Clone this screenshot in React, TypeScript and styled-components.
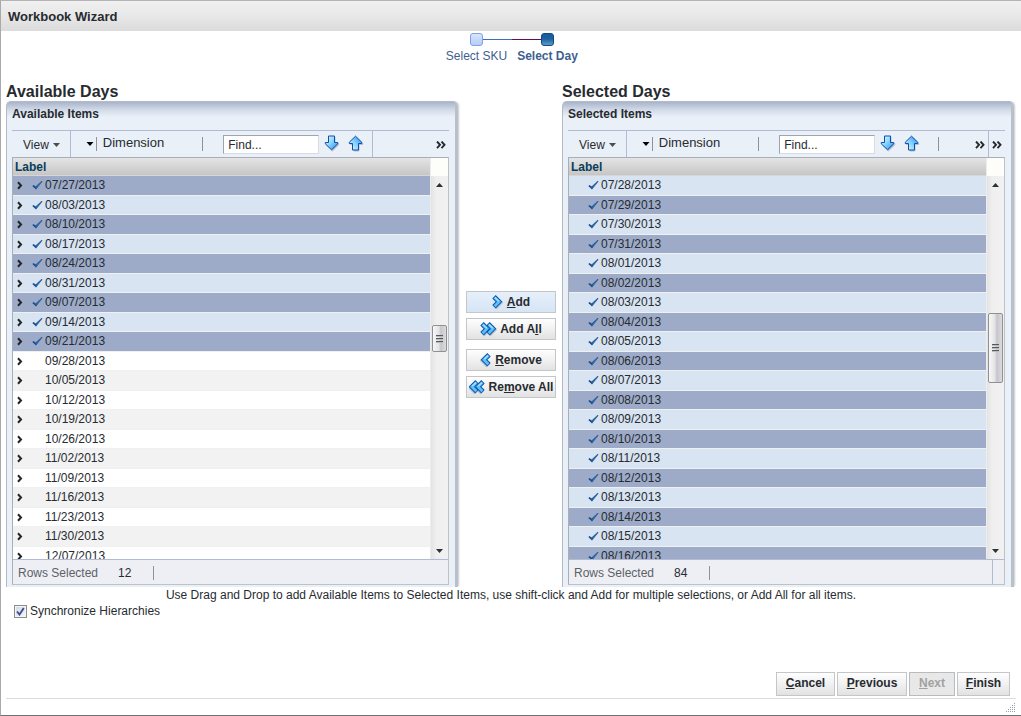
import React, { useId } from "react";
import styled, { createGlobalStyle, css } from "styled-components";

const colors = {
  text: "#272b30",
  link: "#3e5f8f",
  rule: "#b2bad4",
  frame: "#a9afb8",
  panel: "#e9f0f8",
  rowDark: "#9dabc9",
  rowLight: "#d8e4f2",
};

const GlobalStyle = createGlobalStyle`
  *, *::before, *::after { box-sizing: border-box; }
  body {
    margin: 0;
    background: #fff;
    color: ${colors.text};
    font: 12px/16px "Liberation Sans", Arial, sans-serif;
  }
  button, input { font: inherit; color: inherit; }
  svg { display: block; flex: none; }
`;

const Dialog = styled.div`
  display: flex;
  flex-direction: column;
  min-height: 100vh;
  border-top: 1px solid #b4b4b6;
  border-left: 1px solid #a9a9ab;
  border-bottom: 1px solid #6f7073;
`;

const TitleBar = styled.header`
  height: 30px;
  padding: 0 7px;
  background: linear-gradient(#f1f0f1, #e8e8e8 50%, #dbdbdb);
`;

const Title = styled.h1`
  margin: 0;
  font-size: 13px;
  line-height: 32px;
`;

const Train = styled.ol`
  display: flex;
  justify-content: center;
  margin: 0;
  padding: 2px 0 0 2px;
  list-style: none;
`;

const Stop = styled.li`
  width: 71px;
`;

const StopTrack = styled.div`
  display: flex;
  align-items: center;
  height: 13px;
`;

const Rail = styled.span<{ $color: string }>`
  flex: 1;
  height: 1px;
  background: ${(p) => p.$color};
`;

const StopBox = styled.span<{ $current?: boolean }>`
  width: 13px;
  height: 13px;
  border: 1px solid ${(p) => (p.$current ? "#0f4a86" : "#7f9fe8")};
  border-radius: 3px;
  background: ${(p) =>
    p.$current
      ? "linear-gradient(#1a5b9b, #1f629f 45%, #5a9acb)"
      : "linear-gradient(#dbe6fd, #c6d8fb 50%, #b9cefa)"};
`;

const StopLink = styled.a<{ $current?: boolean }>`
  display: flex;
  justify-content: center;
  padding-top: 2px;
  color: ${colors.link};
  font-weight: ${(p) => (p.$current ? "bold" : "normal")};
  text-decoration: none;
  white-space: nowrap;
`;

const Shuttle = styled.main`
  display: grid;
  grid-template-columns: 1fr 104px 1fr;
  padding: 17px 7px 0 5px;
`;

const Column = styled.section`
  min-width: 0;
`;

const ColumnTitle = styled.h2`
  margin: 0;
  height: 20px;
  font-size: 16px;
  line-height: 22px;
`;

const Panel = styled.div`
  padding: 0 6px 2px 5px;
  border: solid #b3bac9;
  border-width: 1px 3px 0 1px;
  border-right-color: #b9c0ca;
  border-radius: 5px 5px 0 0;
  background: linear-gradient(#a9b4cb, #d3dbe8 8px, ${colors.panel} 15px);
  box-shadow: 2px 0 2px -1px #c9cbce;
`;

const PanelTitle = styled.h3`
  margin: 0;
  height: 28px;
  font-size: 12px;
  line-height: 24px;
`;

const Toolbar = styled.div`
  display: flex;
  align-items: center;
  height: 27px;
  border-top: 1px solid ${colors.rule};
`;

const FlatButton = styled.button`
  display: flex;
  align-items: center;
  padding: 0;
  border: 0;
  background: none;
`;

const ViewButton = styled(FlatButton)`
  gap: 4px;
  height: 26px;
  padding: 2px 10px 0 11px;
  border-right: 1px solid ${colors.rule};
`;

const DimensionButton = styled(FlatButton)`
  gap: 2px;
  margin-left: 15px;
  font-size: 13px;
`;

const DimensionText = styled.span`
  padding: 0 0 3px 4px;
`;

const Tick = styled.span`
  width: 1px;
  height: 14px;
  background: #8f9399;
`;

const AfterDimension = styled.div`
  display: flex;
  flex: none;
  padding: 0 20px 0 38px;
`;

const FindField = styled.input`
  width: 96px;
  height: 19px;
  padding: 1px 4px 0;
  border: 1px solid #d8dce2;
  border-top-color: #9fa5ab;
  border-left-color: #9fa5ab;
  border-radius: 0;
  background: #fff;
  &::placeholder { color: ${colors.text}; opacity: 1; }
`;

const FindSteps = styled.div`
  display: flex;
  gap: 8px;
  padding: 0 0 2px 5px;
`;

const Divider = styled.span`
  width: 1px;
  height: 26px;
  margin-left: 8px;
  background: ${colors.rule};
`;

const ShortDivider = styled(Tick)`
  margin-left: 18px;
`;

const Overflow = styled.div`
  display: flex;
  align-items: center;
  height: 26px;
  margin-left: auto;
  padding-right: 3px;
`;

const OverflowButton = styled(FlatButton)<{ $ruled?: boolean }>`
  height: 26px;
  padding-top: 1px;
  ${(p) =>
    p.$ruled &&
    css`
      padding-right: 3px;
      margin-right: 3px;
      border-right: 1px solid ${colors.rule};
    `}
`;

const Frame = styled.div`
  border: 1px solid ${colors.frame};
  border-right-color: #bfc2c4;
  border-bottom-color: #bfc2c4;
`;

const GridArea = styled.div`
  display: grid;
  grid-template-columns: minmax(0, 1fr) 17px;
  height: 401px;
`;

const TableClip = styled.div`
  overflow: hidden;
  border-right: 1px solid #eceded;
`;

const Table = styled.table`
  width: 100%;
  border-spacing: 0;
`;

const HeadCell = styled.th`
  height: 18px;
  padding: 1px 2px 0;
  border-bottom: 1px solid #d6d6d6;
  background: linear-gradient(#e4e4e4, #c6c6c6);
  color: #073e5c;
  line-height: 16px;
  text-align: left;
`;

type Tone = "dark" | "light" | "white" | "gray";

const toneFill: Record<Tone, string> = {
  dark: colors.rowDark,
  light: colors.rowLight,
  white: "#ffffff",
  gray: "#f2f2f2",
};

const Row = styled.tr<{ $tone: Tone }>`
  background: ${(p) => toneFill[p.$tone]};
  > td { height: 20px; }
  &:nth-child(even) > td { height: 19px; }
`;

const Cell = styled.td`
  padding: 0;
  border-bottom: 1px solid #eff0f1;
  vertical-align: top;
`;

const CellContent = styled.div`
  display: grid;
  grid-template-columns: 19px 13px 1fr;
  align-items: center;
  height: 18px;
`;

const Expander = styled(FlatButton)`
  padding-left: 4px;
`;

const DateText = styled.span`
  grid-column: 3;
  line-height: 18px;
`;

const Scroller = styled.div`
  display: flex;
  flex-direction: column;
  background: #fdfefa;
`;

const Corner = styled.div`
  height: 18px;
`;

const ScrollTrack = styled.div`
  display: flex;
  flex: 1;
  flex-direction: column;
  align-items: center;
  padding: 0 1px;
  background: linear-gradient(90deg, #e3e3e3, #efefef 30%, #f1f1f1);
`;

const ScrollButton = styled(FlatButton)`
  justify-content: center;
  width: 15px;
  height: 17px;
`;

const ScrollSpace = styled.div<{ $share: number }>`
  flex: ${(p) => p.$share} 0 0;
`;

const Thumb = styled.div<{ $length: number }>`
  display: flex;
  align-items: center;
  justify-content: center;
  width: 15px;
  height: ${(p) => p.$length}px;
  border: 1px solid #8f9093;
  border-radius: 2px;
  background: linear-gradient(90deg, #f7f7f7, #e4e4e6 45%, #c5c5cb 60%, #dcdcdf);
`;

const Status = styled.div`
  display: flex;
  align-items: center;
  height: 25px;
  padding: 1px 0 0 5px;
  border-top: 1px solid ${colors.rule};
  background: #edeff5;
`;

const StatusLabel = styled.span`
  width: 100px;
  color: #5d6166;
`;

const StatusCount = styled.span`
  width: 35px;
`;

const StatusEnd = styled.span`
  align-self: stretch;
  width: 12px;
  margin: -1px 0 0 auto;
  border-left: 1px solid ${colors.rule};
`;

const Moves = styled.div`
  display: flex;
  flex-direction: column;
  justify-content: center;
  gap: 9px;
  padding: 21px 6px 0 8px;
`;

const MovePair = styled.div`
  display: flex;
  flex-direction: column;
  gap: 5px;
`;

const PushButton = styled.button<{ $width?: number; $hot?: boolean }>`
  display: flex;
  align-items: center;
  justify-content: center;
  width: ${(p) => (p.$width ? `${p.$width}px` : "auto")};
  height: 24px;
  padding: 0 0 2px;
  border: 1px solid #c4c7ca;
  background: ${(p) =>
    p.$hot
      ? "linear-gradient(#e6f0fb, #d6e4f4)"
      : "linear-gradient(#fefefe, #f1f1f1 50%, #e2e2e2)"};
  font-weight: bold;
  white-space: nowrap;
  &:disabled {
    border-color: #b9bbbd;
    background: #e8e8e8;
    color: #a0a1a3;
  }
`;

const MoveButton = styled(PushButton)`
  gap: 3px;
  height: 22px;
  padding: 0;
`;

const Hint = styled.p`
  margin: 0;
  line-height: 16px;
  text-align: center;
`;

const SyncLabel = styled.label`
  display: flex;
  align-items: center;
  align-self: flex-start;
  gap: 3px;
  padding-left: 13px;
`;

const CheckHolder = styled.span`
  display: grid;
  place-items: center;
  > * { grid-area: 1 / 1; }
  > svg { pointer-events: none; visibility: hidden; }
  > input:checked + svg { visibility: visible; }
`;

const CheckInput = styled.input`
  appearance: none;
  width: 13px;
  height: 13px;
  margin: 0;
  border: 1px solid #8b8d90;
  background: linear-gradient(135deg, #d3d7dd, #f6f7f8);
  box-shadow: inset 0 0 0 1px #f4f4f4;
`;

const Actions = styled.footer`
  display: flex;
  justify-content: flex-end;
  gap: 2px;
  margin: auto 5px 0 5px;
  padding: 0 6px 2px 0;
  border-bottom: 1px solid #dcdddf;
`;

const GripBar = styled.div`
  display: flex;
  justify-content: flex-end;
  height: 16px;
  padding: 4px 5px 0 0;
`;

const Mnemonic = styled.u`
  text-decoration: underline;
  text-underline-offset: 1px;
`;

function Caret({ color = "#4a4d50", size = 7 }: { color?: string; size?: number }) {
  return (
    <svg width={size} height="4" viewBox="0 0 7 4" aria-hidden="true">
      <path d="M0 0h7L3.5 4z" fill={color} />
    </svg>
  );
}

function FindArrow({ up = false }: { up?: boolean }) {
  const id = useId();
  return (
    <svg width="16" height="17" viewBox="0 0 16 17" aria-hidden="true">
      <defs>
        <linearGradient id={id} x1="0" y1="0" x2="1" y2="1">
          <stop offset="0" stopColor="#f0fbff" />
          <stop offset="0.45" stopColor="#8fd6ff" />
          <stop offset="1" stopColor="#1d90f2" />
        </linearGradient>
      </defs>
      <g transform={up ? "matrix(1 0 0 -1 0 16)" : undefined} strokeLinejoin="round">
        <path
          d="M5 1h5v6.500h3.700v1.300l-6.200 6-6.200-6v-1.300h3.700z"
          transform={up ? "translate(1 -1)" : "translate(1 1)"}
          fill="#a9aec0"
          stroke="#b9bdca"
        />
        <path d="M4.500 1h6v6.500h3.200v1.300l-6.200 6-6.200-6v-1.300h3.200z" fill={`url(#${id})`} stroke="#0b4fae" />
      </g>
    </svg>
  );
}

function Chevrons({ double = false, left = false }: { double?: boolean; left?: boolean }) {
  const width = double ? 17 : 12;
  const marks = double ? [0, 6] : [0];
  return (
    <svg width={width} height="16" viewBox={`0 0 ${width} 16`} aria-hidden="true">
      <g transform={left ? `matrix(-1 0 0 1 ${width - 1} 0)` : undefined} fill="none" strokeLinejoin="miter">
        {marks.map((x) => (
          <g key={x} transform={`translate(${x} 0)`}>
            <path d="M3 3.800l5 5-5 5" stroke="#bfc3cb" strokeWidth="4.500" />
            <path d="M2 2.800l5 5-5 5" stroke="#0c56ad" strokeWidth="4.800" />
            <path d="M2.600 3.400l4.400 4.400-4.400 4.400" stroke="#5cc0fb" strokeWidth="2.800" />
            <path d="M3 3.400l3.800 3.800" stroke="#b4e6ff" strokeWidth="1.200" />
          </g>
        ))}
      </g>
    </svg>
  );
}

function MoreIcon() {
  return (
    <svg width="10" height="8" viewBox="0 0 10 8" aria-hidden="true">
      <path d="M1 0.500l3 3.300-3 3.300M5.500 0.500l3 3.300-3 3.300" fill="none" stroke="#26282b" strokeWidth="1.900" />
    </svg>
  );
}

function ExpandIcon() {
  return (
    <svg width="6" height="9" viewBox="0 0 6 9" aria-hidden="true">
      <path d="M1 1.300l3 3.200-3 3.200" fill="none" stroke="#222426" strokeWidth="2" />
    </svg>
  );
}

function CheckMark() {
  return (
    <svg width="11" height="10" viewBox="0 0 11 10" aria-hidden="true">
      <path d="M0.300 6l1.300-1.100 2 1.600L9.500 1l1 0.500L4 9.600z" fill="#174f8c" />
      <path d="M4.200 7.600L9.400 2" stroke="#4b86bd" strokeWidth="0.800" />
    </svg>
  );
}

interface Item {
  date: string;
  selected: boolean;
}

interface PanelProps {
  heading: string;
  title: string;
  items: Item[];
  count: number;
  expandable?: boolean;
  darkFirst?: boolean;
  thumb: number;
  scrolled: number;
}

function toneOf(item: Item, index: number, darkFirst?: boolean): Tone {
  const even = index % 2 === 0;
  if (!item.selected) return even ? "gray" : "white";
  return even === !!darkFirst ? "dark" : "light";
}

function ItemsPanel({ heading, title, items, count, expandable, darkFirst, thumb, scrolled }: PanelProps) {
  return (
    <Column>
      <ColumnTitle>{heading}</ColumnTitle>
      <Panel>
        <PanelTitle>{title}</PanelTitle>
        <Toolbar>
          <ViewButton type="button">
            View <Caret />
          </ViewButton>
          <DimensionButton type="button">
            <Caret color="#000" size={8} />
            <Tick />
            <DimensionText>Dimension</DimensionText>
          </DimensionButton>
          <AfterDimension>
            <Tick />
          </AfterDimension>
          <FindField type="text" placeholder="Find..." aria-label={`Find in ${title}`} />
          <FindSteps>
            <FlatButton type="button" aria-label="Find next">
              <FindArrow />
            </FlatButton>
            <FlatButton type="button" aria-label="Find previous">
              <FindArrow up />
            </FlatButton>
          </FindSteps>
          {expandable ? <Divider /> : <ShortDivider />}
          <Overflow>
            {!expandable && (
              <OverflowButton type="button" $ruled aria-label="More tools">
                <MoreIcon />
              </OverflowButton>
            )}
            <OverflowButton type="button" aria-label="More">
              <MoreIcon />
            </OverflowButton>
          </Overflow>
        </Toolbar>
        <Frame>
          <GridArea>
            <TableClip>
              <Table>
                <thead>
                  <tr>
                    <HeadCell scope="col">Label</HeadCell>
                  </tr>
                </thead>
                <tbody>
                  {items.map((item, index) => (
                    <Row key={item.date} $tone={toneOf(item, index, darkFirst)}>
                      <Cell>
                        <CellContent>
                          {expandable ? (
                            <Expander type="button" aria-label={`Expand ${item.date}`}>
                              <ExpandIcon />
                            </Expander>
                          ) : (
                            <span />
                          )}
                          {item.selected && <CheckMark />}
                          <DateText>{item.date}</DateText>
                        </CellContent>
                      </Cell>
                    </Row>
                  ))}
                </tbody>
              </Table>
            </TableClip>
            <Scroller>
              <Corner />
              <ScrollTrack>
                <ScrollButton type="button" aria-label="Scroll up">
                  <svg width="7" height="4" viewBox="0 0 7 4" aria-hidden="true">
                    <path d="M0 4h7L3.500 0z" fill="#2e3033" />
                  </svg>
                </ScrollButton>
                <ScrollSpace $share={scrolled} />
                <Thumb $length={thumb}>
                  <svg width="7" height="8" viewBox="0 0 7 8" aria-hidden="true">
                    <path d="M0 0.500h7M0 3.500h7M0 6.500h7" stroke="#55585c" />
                    <path d="M0 1.500h7M0 4.500h7M0 7.500h7" stroke="#b9bbbf" />
                  </svg>
                </Thumb>
                <ScrollSpace $share={100 - scrolled} />
                <ScrollButton type="button" aria-label="Scroll down">
                  <Caret color="#2e3033" />
                </ScrollButton>
              </ScrollTrack>
            </Scroller>
          </GridArea>
          <Status>
            <StatusLabel>Rows Selected</StatusLabel>
            <StatusCount>{count}</StatusCount>
            <Tick />
            {!expandable && <StatusEnd />}
          </Status>
        </Frame>
      </Panel>
    </Column>
  );
}

const availableDates = [
  "07/27/2013", "08/03/2013", "08/10/2013", "08/17/2013", "08/24/2013",
  "08/31/2013", "09/07/2013", "09/14/2013", "09/21/2013", "09/28/2013",
  "10/05/2013", "10/12/2013", "10/19/2013", "10/26/2013", "11/02/2013",
  "11/09/2013", "11/16/2013", "11/23/2013", "11/30/2013", "12/07/2013",
];

const selectedDates = [
  "07/28/2013", "07/29/2013", "07/30/2013", "07/31/2013", "08/01/2013",
  "08/02/2013", "08/03/2013", "08/04/2013", "08/05/2013", "08/06/2013",
  "08/07/2013", "08/08/2013", "08/09/2013", "08/10/2013", "08/11/2013",
  "08/12/2013", "08/13/2013", "08/14/2013", "08/15/2013", "08/16/2013",
];

const available: Item[] = availableDates.map((date, i) => ({ date, selected: i < 9 }));
const selected: Item[] = selectedDates.map((date) => ({ date, selected: true }));

export default function App() {
  return (
    <>
      <GlobalStyle />
      <Dialog>
        <TitleBar>
          <Title>Workbook Wizard</Title>
        </TitleBar>
        <Train>
          <Stop>
            <StopTrack>
              <Rail $color="transparent" />
              <StopBox />
              <Rail $color="#3d6cc0" />
            </StopTrack>
            <StopLink href="#sku">Select SKU</StopLink>
          </Stop>
          <Stop>
            <StopTrack>
              <Rail $color="#5b0f63" />
              <StopBox $current />
              <Rail $color="transparent" />
            </StopTrack>
            <StopLink href="#day" $current aria-current="step">
              Select Day
            </StopLink>
          </Stop>
        </Train>
        <Shuttle>
          <ItemsPanel
            heading="Available Days"
            title="Available Items"
            items={available}
            count={12}
            expandable
            darkFirst
            thumb={27}
            scrolled={41}
          />
          <Moves>
            <MovePair>
              <MoveButton type="button" $hot>
                <Chevrons />
                <span><Mnemonic>A</Mnemonic>dd</span>
              </MoveButton>
              <MoveButton type="button">
                <Chevrons double />
                <span>Add A<Mnemonic>l</Mnemonic>l</span>
              </MoveButton>
            </MovePair>
            <MovePair>
              <MoveButton type="button">
                <Chevrons left />
                <span><Mnemonic>R</Mnemonic>emove</span>
              </MoveButton>
              <MoveButton type="button">
                <Chevrons double left />
                <span>Re<Mnemonic>m</Mnemonic>ove All</span>
              </MoveButton>
            </MovePair>
          </Moves>
          <ItemsPanel
            heading="Selected Days"
            title="Selected Items"
            items={selected}
            count={84}
            thumb={70}
            scrolled={43}
          />
        </Shuttle>
        <Hint>
          Use Drag and Drop to add Available Items to Selected Items, use shift-click and Add for multiple
          selections, or Add All for all items.
        </Hint>
        <SyncLabel>
          <CheckHolder>
            <CheckInput type="checkbox" defaultChecked />
            <svg width="9" height="9" viewBox="0 0 9 9" aria-hidden="true">
              <path d="M1 4.500l2.500 3L7.800 1" fill="none" stroke="#3d4f94" strokeWidth="1.900" />
            </svg>
          </CheckHolder>
          Synchronize Hierarchies
        </SyncLabel>
        <Actions>
          <PushButton type="button" $width={59}>
            <span><Mnemonic>C</Mnemonic>ancel</span>
          </PushButton>
          <PushButton type="button" $width={70}>
            <span><Mnemonic>P</Mnemonic>revious</span>
          </PushButton>
          <PushButton type="button" $width={46} disabled>
            <span><Mnemonic>N</Mnemonic>ext</span>
          </PushButton>
          <PushButton type="button" $width={53}>
            <span><Mnemonic>F</Mnemonic>inish</span>
          </PushButton>
        </Actions>
        <GripBar>
          <svg width="10" height="10" viewBox="0 0 10 10" aria-hidden="true" fill="#9c9ea8">
            {[0, 1, 2, 3, 4].flatMap((r) =>
              [0, 1, 2, 3, 4]
                .filter((c) => c + r >= 4)
                .map((c) => <rect key={`${r}-${c}`} x={c * 2} y={r * 2} width="1" height="1" />)
            )}
          </svg>
        </GripBar>
      </Dialog>
    </>
  );
}
